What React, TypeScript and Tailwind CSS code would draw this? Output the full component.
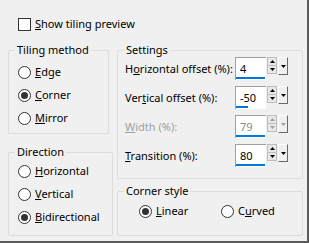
import React from 'react';

const font = "font-['Noto_Sans',sans-serif] text-[11px] leading-[16px]";

function Radio({ label, ul, checked, className = '' }: { label: string; ul: number; checked?: boolean; className?: string }) {
  return (
    <div className={`flex items-center h-[16px] gap-[4px] whitespace-nowrap ${className}`}>
      <span className="w-[13px] h-[13px] rounded-full border border-[#333] bg-white flex items-center justify-center">
        {checked && <span className="w-[7px] h-[7px] rounded-full bg-[#333]" />}
      </span>
      <span>
        {label.slice(0, ul)}
        <u>{label[ul]}</u>
        {label.slice(ul + 1)}
      </span>
    </div>
  );
}

function Group({ title, className, children }: { title: string; className: string; children: React.ReactNode }) {
  return (
    <div className={`border border-[#dcdcdc] rounded-[2px] ${className}`}>
      <div className="w-fit -mt-[9px] ml-[6px] px-[2px] bg-[#f0f0f0] whitespace-nowrap">{title}</div>
      {children}
    </div>
  );
}

function Arrow({ up, color }: { up?: boolean; color: string }) {
  return (
    <svg width="5" height="3" viewBox="0 0 5 3">
      <path d={up ? 'M0 3 L2.5 0 L5 3 Z' : 'M0 0 L5 0 L2.5 3 Z'} fill={color} />
    </svg>
  );
}

function Spin({ value, bar, disabled }: { value: string; bar: number; disabled?: boolean }) {
  const c = disabled ? '#a0a0a0' : '#000';
  return (
    <div className="flex items-start ml-auto mr-[14px]">
      <div className="relative w-[31px] h-[23px] bg-white border-t border-l border-[#a0a0a0] flex items-center pl-[4px]">
        <span className={disabled ? 'text-[#8a8a8a]' : 'text-black'}>{value}</span>
        <span className="absolute left-0 bottom-[1px] h-[2px] bg-[#0078d7]" style={{ width: bar }} />
      </div>
      <div className="flex flex-col w-[10px] h-[17px] ml-[1px] border border-[#bdbdbd] bg-[#e8e8e8]">
        <div className="flex-1 flex items-center justify-center border-b border-[#bdbdbd]"><Arrow up color={c} /></div>
        <div className="flex-1 flex items-center justify-center"><Arrow color={c} /></div>
      </div>
      <div className="w-[10px] h-[18px] ml-[1px] bg-[#f0f0f0] border border-t-white border-l-white border-r-[#696969] border-b-[#696969] flex items-center justify-center">
        <Arrow color={c} />
      </div>
    </div>
  );
}

export default function App() {
  return (
    <div className={`${font} w-[309px] h-[243px] bg-[#f0f0f0] text-black border-r-2 border-b-2 border-[#5a5a5a] pl-[8px] pt-[16px] overflow-hidden`}>
      <div className="flex items-center h-[16px] ml-[10px] gap-[4px]">
        <span className="w-[13px] h-[13px] border border-[#333] bg-white" />
        <span><u>S</u>how tiling preview</span>
      </div>

      <div className="flex mt-[18px]">
        <div className="flex flex-col w-[105px]">
          <Group title="Tiling method" className="w-[101px] h-[84px]">
            <div className="flex flex-col gap-[7px] pt-[6px] pl-[9px]">
              <Radio label="Edge" ul={0} />
              <Radio label="Corner" ul={0} checked />
              <Radio label="Mirror" ul={0} />
            </div>
          </Group>
          <Group title="Direction" className="w-[105px] h-[84px] mt-[18px]">
            <div className="flex flex-col gap-[7px] pt-[3px] pl-[9px]">
              <Radio label="Horizontal" ul={0} />
              <Radio label="Vertical" ul={0} />
              <Radio label="Bidirectional" ul={0} checked />
            </div>
          </Group>
        </div>

        <div className="flex flex-col ml-[4px]">
          <Group title="Settings" className="w-[186px] h-[129px]">
            <div className="flex flex-col gap-[6px] -mt-[1px] pl-[7px] whitespace-nowrap">
              <div className="flex items-center h-[23px]">
                <span>H<u>o</u>rizontal offset (%):</span>
                <Spin value="4" bar={29} />
              </div>
              <div className="flex items-center h-[23px]">
                <span>Ver<u>t</u>ical offset (%):</span>
                <Spin value="-50" bar={12} />
              </div>
              <div className="flex items-center h-[23px] text-[#a0a0a0]">
                <span><u>W</u>idth (%):</span>
                <Spin value="79" bar={29} disabled />
              </div>
              <div className="flex items-center h-[23px]">
                <span><u>T</u>ransition (%):</span>
                <Spin value="80" bar={29} />
              </div>
            </div>
          </Group>
          <Group title="Corner style" className="w-[186px] h-[45px] mt-[12px]">
            <div className="flex pt-[4px] pl-[21px]">
              <Radio label="Linear" ul={0} checked className="w-[82px]" />
              <Radio label="Curved" ul={1} />
            </div>
          </Group>
        </div>
      </div>
    </div>
  );
}
